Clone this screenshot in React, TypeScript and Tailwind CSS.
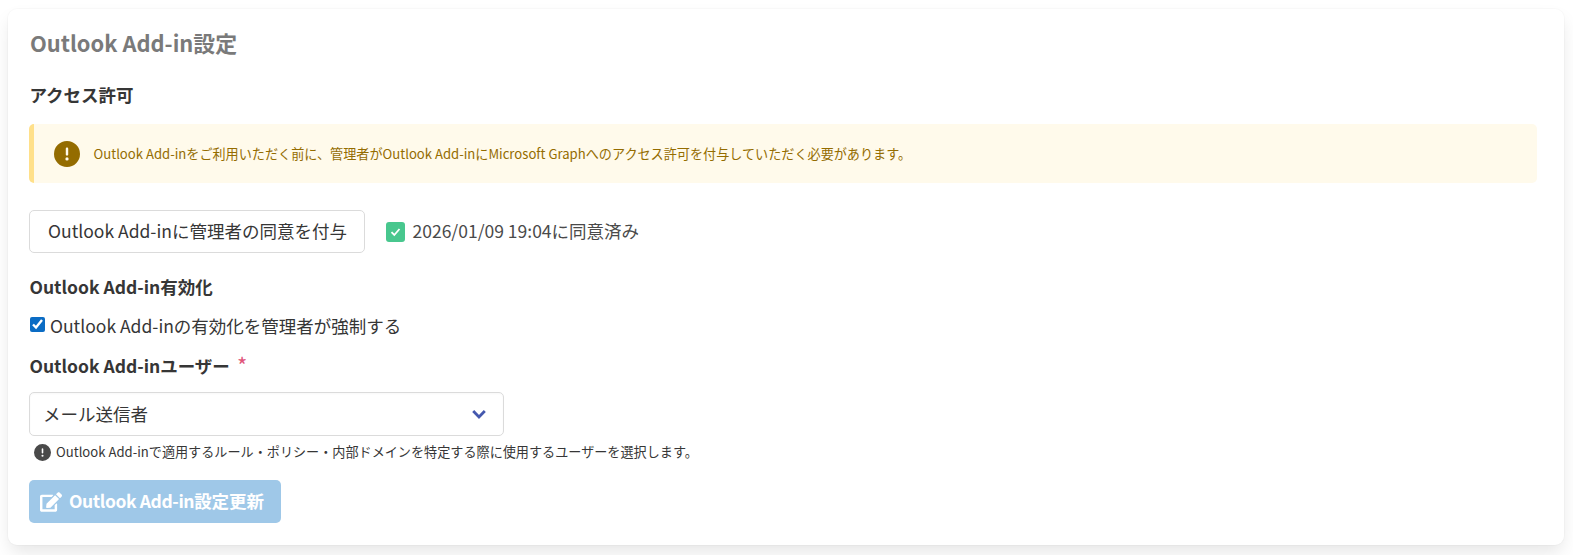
import React from "react";
import { FaEdit } from "react-icons/fa";
import { FaCircleExclamation } from "react-icons/fa6";

export default function App() {
  return (
    <div className="h-[555px] w-[1573px] bg-white pl-2 pr-[9px] pt-[9px] font-['Noto_Sans_CJK_JP',sans-serif] antialiased [text-rendering:optimizeLegibility]">
      <div className="h-[536px] rounded-[9px] bg-white px-[21px] pt-[17px] shadow-[0_9px_18px_-2px_rgba(10,10,10,0.1),0_0_0_1px_rgba(10,10,10,0.02)]">
        <h2 className="ml-[1px] text-[21.875px] leading-[33px] font-bold text-[#7a7a7a]">Outlook Add-in設定</h2>
        <h3 className="ml-[0.5px] mt-[23px] text-[17.5px] leading-[26px] font-bold text-[#363636]">アクセス許可</h3>
        <div className="mt-[16px] flex h-[59px] w-[1508px] items-center gap-[13.5px] rounded-[5px] border-l-[5px] border-[#ffe08a] bg-[#fffaeb] pl-[20px]">
          <FaCircleExclamation className="h-[26px] w-[26px] text-[#946c00]" />
          <span className="text-[13.125px] text-[#946c00]">Outlook Add-inをご利用いただく前に、管理者がOutlook Add-inにMicrosoft Graphへのアクセス許可を付与していただく必要があります。</span>
        </div>
        <div className="mt-[27px] flex items-center gap-[21px]">
          <button className="h-[43px] w-[336px] rounded-[5px] border border-[#dbdbdb] bg-white pl-[1px] text-[17.5px] text-[#363636]">Outlook Add-inに管理者の同意を付与</button>
          <span className="flex items-center gap-[7.5px] text-[17.5px] text-[#4a4a4a]">
            <span className="flex h-[20px] w-[19px] items-center justify-center rounded-[3px] bg-[#48c78e]">
              <svg width="11" height="10" viewBox="0 0 11 10" fill="none" stroke="white" strokeWidth="1.8"><path d="M1.5 5.2 4.3 8 9.5 2" /></svg>
            </span>
            2026/01/09 19:04に同意済み
          </span>
        </div>
        <h3 className="ml-[0.5px] mt-[21px] text-[17.5px] leading-[26px] font-bold text-[#363636]">Outlook Add-in有効化</h3>
        <label className="mt-[13px] flex items-center gap-[5px] text-[17.5px] leading-[25px] text-[#363636]">
          <input type="checkbox" defaultChecked className="m-0 mb-[2px] ml-[1px] h-[15px] w-[15px] accent-[#0b6cc4]" />
          Outlook Add-inの有効化を管理者が強制する
        </label>
        <h3 className="ml-[0.5px] mt-[15px] flex text-[17.5px] leading-[26px] font-bold text-[#363636]">
          Outlook Add-inユーザー<span className="-mt-[2px] ml-[7px] text-[22px] leading-[26px] font-normal text-[#e0557a]">*</span>
        </h3>
        <div className="mt-[13px] flex h-[44px] w-[475px] items-center justify-between rounded-[5px] border border-[#dbdbdb] pl-[13px] pr-[17px] text-[17.5px] text-[#363636] shadow-[inset_0_1px_2px_rgba(10,10,10,0.03)]">
          メール送信者
          <svg width="14" height="11" viewBox="0 0 14 11" fill="none" stroke="#4558ae" strokeWidth="2.8"><path d="M1.2 2 7 8 12.8 2" /></svg>
        </div>
        <p className="mt-[7px] flex items-center gap-[5px] pl-[5px] text-[13.125px] leading-[18px] text-[#363636]">
          <FaCircleExclamation className="h-[17px] w-[17px] text-[#4a4a4a]" />
          Outlook Add-inで適用するルール・ポリシー・内部ドメインを特定する際に使用するユーザーを選択します。
        </p>
        <button className="mt-[19px] flex h-[43px] w-[252px] items-center gap-[7px] rounded-[5px] bg-[#9fc8e8] pl-[11px] text-[17.5px] font-semibold text-white">
          <FaEdit className="h-[22px] w-[22px]" />
          <span><span className="tracking-[-0.4px]">Outlook Add-in</span>設定更新</span>
        </button>
      </div>
    </div>
  );
}
